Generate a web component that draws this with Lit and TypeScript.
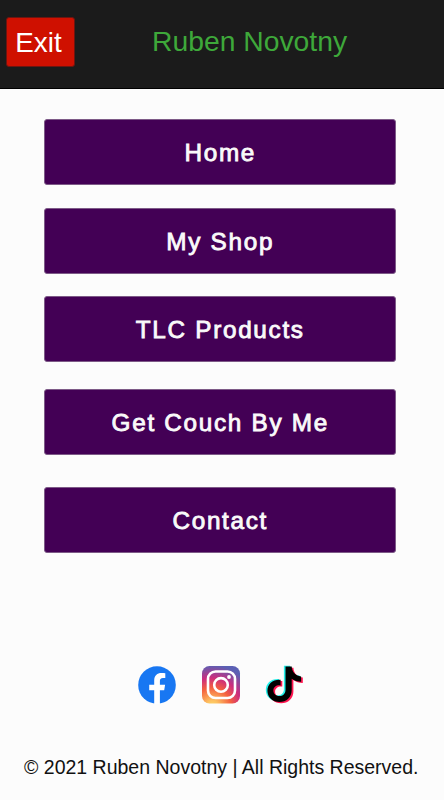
import { LitElement, html, css } from "lit";
import { customElement } from "lit/decorators.js";

@customElement("app-root")
export class AppRoot extends LitElement {
  static styles = css`
    :host {
      display: flex;
      flex-direction: column;
      box-sizing: border-box;
      height: 800px;
      background: #fcfcfc;
      font-family: "Liberation Sans", Arial, sans-serif;
      overflow: hidden;
    }
    header {
      display: flex;
      align-items: flex-start;
      box-sizing: border-box;
      height: 89px;
      flex: none;
      padding: 17px 0 0 6px;
      background: #1b1b1b;
      border-bottom: 1px solid #000;
    }
    button {
      font-family: inherit;
      box-sizing: border-box;
      margin: 0;
      padding: 0;
    }
    .exit {
      width: 69px;
      height: 50px;
      padding: 2px 4px 0 0;
      border: 1px solid #6d1510;
      border-radius: 3px;
      background: #cf1000;
      color: #fff;
      font-size: 27.8px;
      line-height: 46px;
    }
    h1 {
      margin: 8px 0 0 77px;
      font-size: 28.3px;
      line-height: 32px;
      font-weight: 400;
      color: #3ea83a;
      white-space: nowrap;
    }
    nav {
      display: flex;
      flex-direction: column;
      padding: 30px 48.5px 0 44px;
    }
    .link {
      height: 66px;
      margin-bottom: 23px;
      padding-top: 2px;
      border: 1px solid #7d5a87;
      border-radius: 3px;
      background: #430055;
      color: #fafafa;
      font-size: 24.3px;
      letter-spacing: 1.7px;
      text-indent: 1px;
      line-height: 62px;
      -webkit-text-stroke: 0.85px #fafafa;
    }
    .link:nth-child(2) {
      margin-bottom: 22px;
    }
    .link:nth-child(3) {
      margin-bottom: 27px;
    }
    .link:nth-child(4) {
      margin-bottom: 32px;
    }
    .social {
      display: flex;
      gap: 26px;
      margin: 90px 0 0 138px;
    }
    svg {
      display: block;
      width: 38px;
      height: 38px;
      overflow: visible;
    }
    footer {
      margin-top: 51px;
      padding-left: 24px;
      font-size: 19.5px;
      line-height: 24px;
      color: #111;
      white-space: nowrap;
    }
  `;

  private links = ["Home", "My Shop", "TLC Products", "Get Couch By Me", "Contact"];

  render() {
    return html`
      <header>
        <button class="exit">Exit</button>
        <h1>Ruben Novotny</h1>
      </header>
      <nav>${this.links.map((l) => html`<button class="link">${l}</button>`)}</nav>
      <div class="social">
        <svg viewBox="0 0 38 38">
          <circle cx="19" cy="19" r="18.8" fill="#1877f2" />
          <path
            fill="#fff"
            d="M16.2 38V24.2h-5v-5.5h5v-4.2c0-5 2.9-7.6 7.3-7.6 1.4 0 2.7.1 3.8.3v4.7h-2.300c-2.400 0-3.100 1.400-3.100 3v3.800h5.200l-.9 5.500h-4.300V38z"
          />
        </svg>
        <svg viewBox="0 0 38 38">
          <defs>
            <radialGradient id="glow" cx="27%" cy="107%" r="130%">
              <stop offset="0" stop-color="#fdd868" />
              <stop offset=".12" stop-color="#fdc060" />
              <stop offset=".38" stop-color="#f4603f" />
              <stop offset=".58" stop-color="#cc2d7e" />
              <stop offset=".84" stop-color="#5b60b4" />
            </radialGradient>
          </defs>
          <rect width="38" height="37.5" rx="7.5" fill="url(#glow)" />
          <g fill="none" stroke="#fff" stroke-width="2.6">
            <rect x="6" y="5.5" width="27" height="26.5" rx="7.5" />
            <circle cx="19" cy="18.9" r="6.8" />
          </g>
          <circle cx="27" cy="11" r="1.9" fill="#fff" />
        </svg>
        <svg viewBox="0 0 38 38">
          <defs>
            <path
              id="note"
              d="M19.500.5h6.200c.2 5.400 4.100 9.500 9.400 9.900v5.300c-3.700 0-6.800-1.100-9.400-3v11.500c0 7-5.300 11.800-12.200 11.800S1.400 31.200 1.400 24.700c0-6.800 5.500-11.500 13.200-10.900v5.600c-4.200-.5-7.200 1.600-7.200 5.200 0 3.300 2.600 5.500 5.800 5.500 3.700 0 6.300-2.400 6.300-6.400z"
            />
          </defs>
          <use href="#note" x="-1.600" y="-.8" fill="#25f0ea" />
          <use href="#note" x="1.700" y="1.200" fill="#ff1550" />
          <use href="#note" fill="#000" />
        </svg>
      </div>
      <footer>© 2021 Ruben Novotny | All Rights Reserved.</footer>
    `;
  }
}
